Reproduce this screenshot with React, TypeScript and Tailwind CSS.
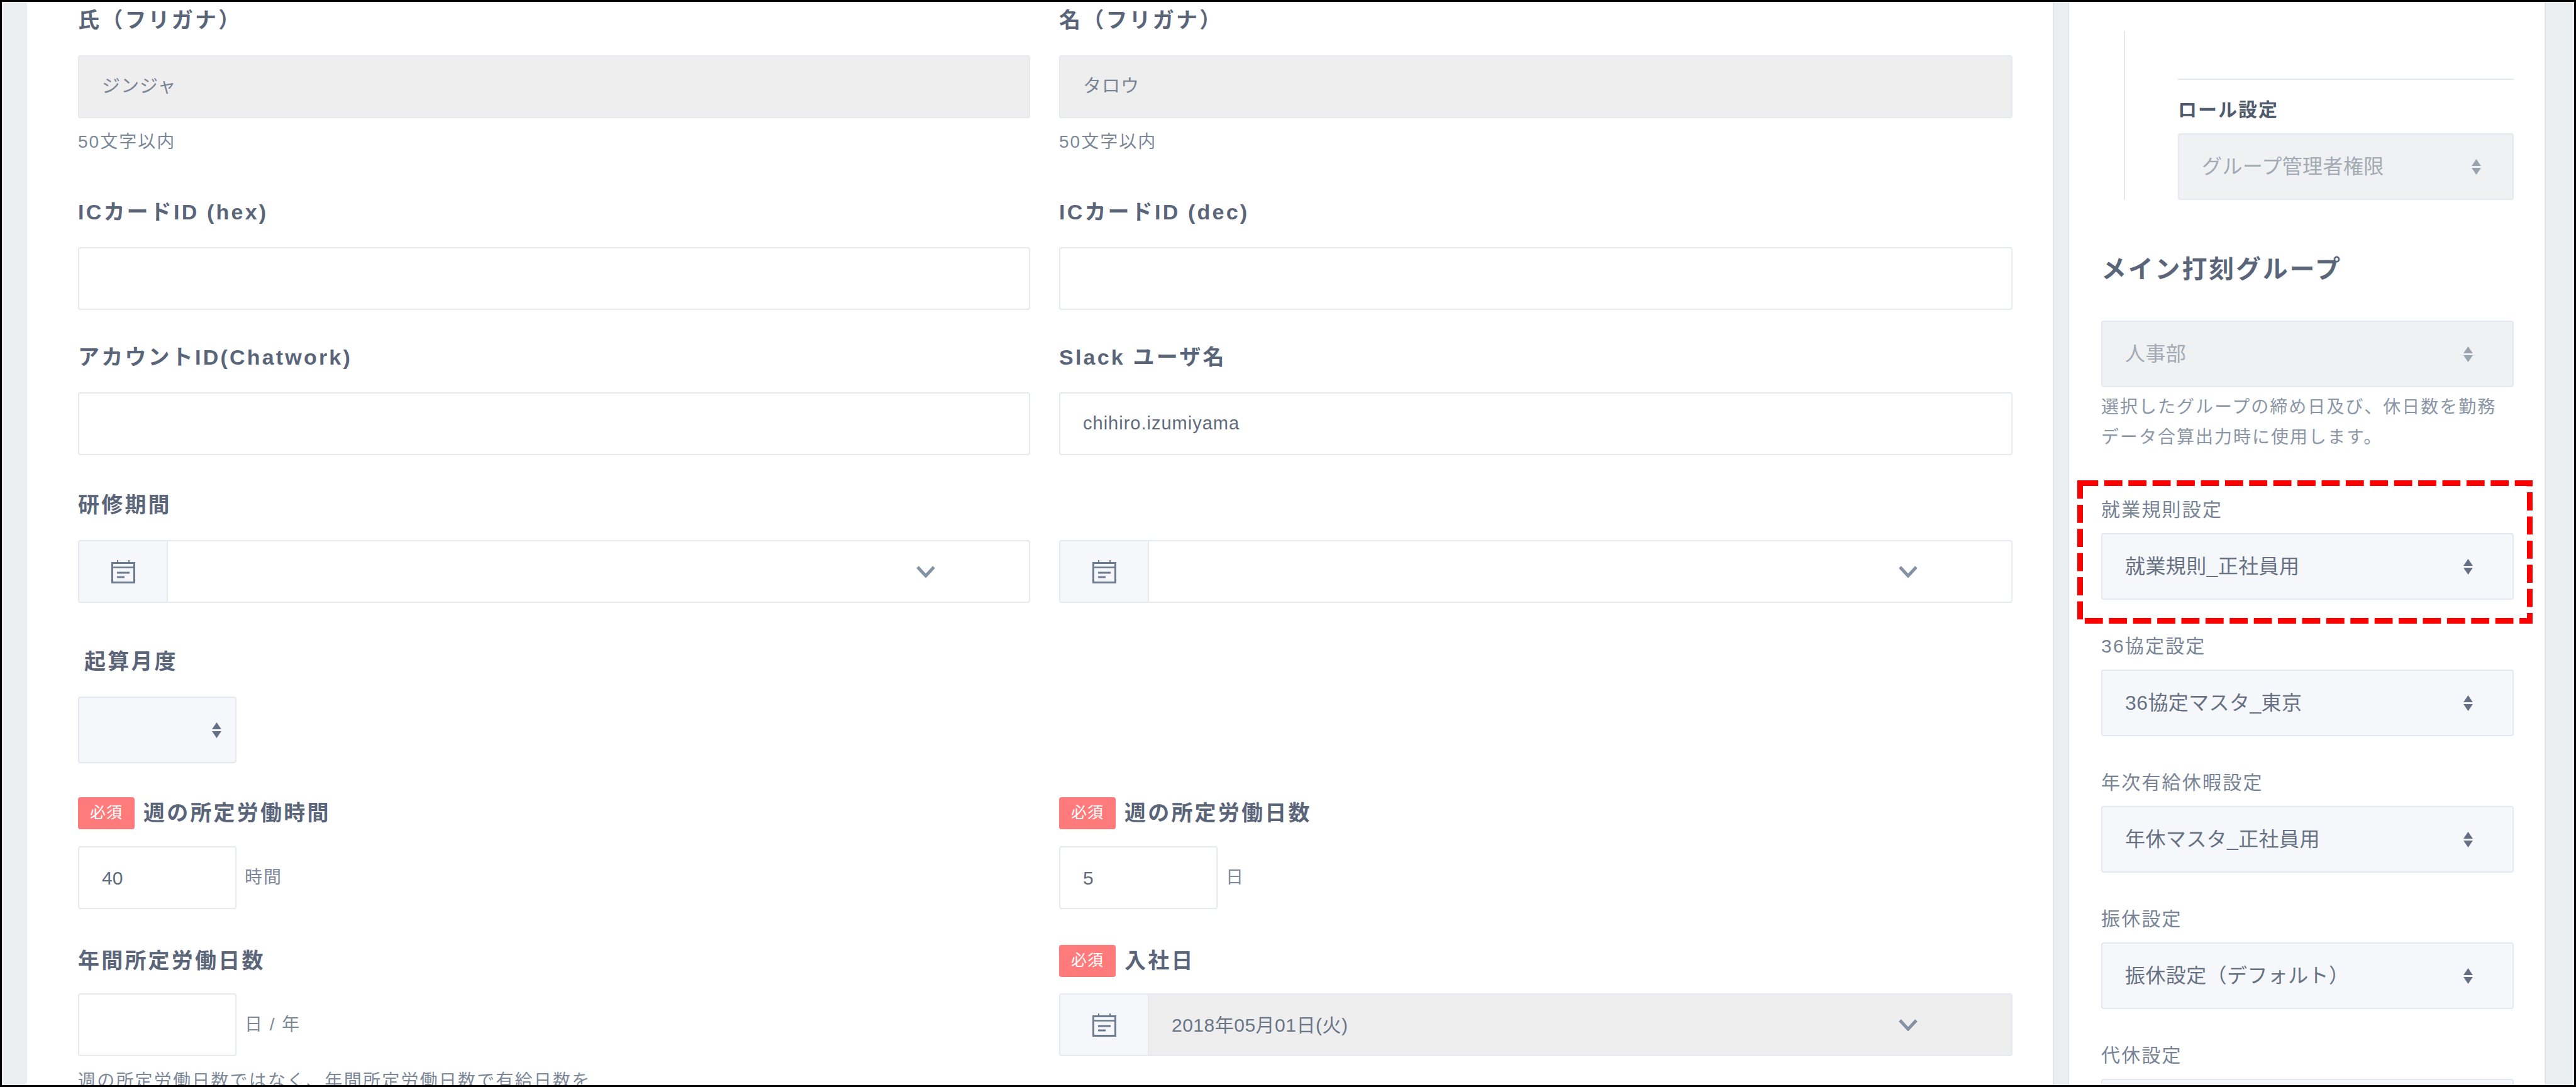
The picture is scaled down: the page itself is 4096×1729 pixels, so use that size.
import React from "react";

const Cal = () => (
  <svg width="38" height="37" viewBox="0 0 38 37" fill="none" stroke="#6b7a90">
    <rect x="1.5" y="4.5" width="35" height="31" strokeWidth="3" />
    <path d="M1.5 11.5H36.5" strokeWidth="2.5" />
    <path d="M10 0V5M28 0V5" strokeWidth="2" />
    <path d="M9 20H29M9 27H21" strokeWidth="3" />
  </svg>
);

const Chevron = () => (
  <svg width="30" height="19" viewBox="0 0 30 19" fill="none" stroke="#8492a6" strokeWidth="5">
    <path d="M2 2L15 16L28 2" />
  </svg>
);

const Arrows = ({ color = "#667085" }: { color?: string }) => (
  <svg width="15" height="25" viewBox="0 0 15 25" fill={color}>
    <path d="M7.5 0L15 11H0Z" />
    <path d="M0 14H15L7.5 25Z" />
  </svg>
);

const Badge = () => (
  <span className="mr-[14px] flex h-[51px] w-[90px] items-center justify-center rounded-[4px] bg-[#ff7b7b] text-[25px] font-normal tracking-[1px] text-white">
    必須
  </span>
);

const Label = ({ children, req, mb = "mb-[30px]", indent }: { children?: React.ReactNode; req?: boolean; mb?: string; indent?: boolean }) => (
  <div className={`flex h-[52px] items-center text-[34px] font-bold tracking-[3.2px] text-[#5a6579] ${mb} ${indent ? "pl-[10px]" : ""}`}>
    {req && <Badge />}
    {children}
  </div>
);

const Input = ({ value, disabled }: { value?: string; disabled?: boolean }) => (
  <div className={`flex h-[100px] items-center rounded-[4px] border-2 border-[#e6e9ed] px-[36px] text-[29px] tracking-[1px] ${disabled ? "bg-[#eeeeee] text-[#7b8494]" : "bg-white text-[#5f6b7d]"}`}>
    {value}
  </div>
);

const DateInput = ({ value, disabled }: { value?: string; disabled?: boolean }) => (
  <div className={`flex h-[100px] items-stretch overflow-hidden rounded-[4px] border-2 border-[#e6e9ed] ${disabled ? "bg-[#eeeeee]" : "bg-white"}`}>
    <div className="flex w-[141px] items-center justify-center border-r-2 border-[#e6e9ed] bg-[#f5f7fa]">
      <Cal />
    </div>
    <div className="flex flex-1 items-center justify-between pl-[36px] pr-[149px] text-[30px] tracking-[0.5px] text-[#6a7587]">
      <span>{value}</span>
      <Chevron />
    </div>
  </div>
);

const Small = ({ value }: { value?: string }) => (
  <div className="flex h-[100px] w-[252px] items-center rounded-[4px] border-2 border-[#e6e9ed] bg-white px-[36px] text-[30px] text-[#5f6b7d]">
    {value}
  </div>
);

const Suffix = ({ children }: { children: React.ReactNode }) => (
  <span className="ml-[13px] text-[28px] tracking-[2px] text-[#7c8798]">{children}</span>
);

const Select = ({ value, disabled, h = "h-[106px]", arrowRight = "pr-[63px]" }: { value?: string; disabled?: boolean; h?: string; arrowRight?: string }) => (
  <div className={`flex items-center justify-between rounded-[4px] border-2 border-[#e4e8f0] pl-[36px] text-[32px] tracking-[0.4px] ${h} ${arrowRight} ${disabled ? "bg-[#eff1f3] text-[#a3aab5]" : "bg-[#f5f7fa] text-[#667184]"}`}>
    <span>{value}</span>
    <Arrows color={disabled ? "#9aa3b0" : "#667085"} />
  </div>
);

const SideField = ({ label, value }: { label: string; value: string }) => (
  <div className="mb-[53px]">
    <div className="mb-[18px] flex h-[40px] items-center text-[30px] tracking-[2.2px] text-[#788496]">{label}</div>
    <Select value={value} />
  </div>
);

export default function App() {
  return (
    <div className="flex h-[1729px] w-[4096px] overflow-hidden border-[3px] border-black bg-[#ebeef0] font-['Liberation_Sans','Noto_Sans_CJK_JP',sans-serif]">
      {/* main form */}
      <div className="ml-[40px] h-full w-[3223px] shrink-0 border-r-2 border-[#dfe3e6] bg-white pl-[81px] pt-[3px]">
        <div className="grid w-[3076px] grid-cols-[1514px_1516px] gap-x-[46px]">
          <div>
            <Label>氏（フリガナ）</Label>
            <Input value="ジンジャ" disabled />
            <div className="mt-[18px] h-[40px] text-[28px] leading-[40px] tracking-[2px] text-[#7c8798]">50文字以内</div>
          </div>
          <div>
            <Label>名（フリガナ）</Label>
            <Input value="タロウ" disabled />
            <div className="mt-[18px] h-[40px] text-[28px] leading-[40px] tracking-[2px] text-[#7c8798]">50文字以内</div>
          </div>

          <div className="mt-[65px]">
            <Label>ICカードID (hex)</Label>
            <Input />
          </div>
          <div className="mt-[65px]">
            <Label>ICカードID (dec)</Label>
            <Input />
          </div>

          <div className="mt-[49px]">
            <Label>アカウントID(Chatwork)</Label>
            <Input />
          </div>
          <div className="mt-[49px]">
            <Label>Slack ユーザ名</Label>
            <Input value="chihiro.izumiyama" />
          </div>

          <div className="mt-[53px]">
            <Label>研修期間</Label>
            <DateInput />
          </div>
          <div className="mt-[53px]">
            <Label />
            <DateInput />
          </div>

          <div className="col-span-2 mt-[67px]">
            <Label indent>起算月度</Label>
            <div className="w-[252px]">
              <Select arrowRight="pr-[22px]" />
            </div>
          </div>

          <div className="mt-[53px]">
            <Label req mb="mb-[27px]">週の所定労働時間</Label>
            <div className="flex items-center">
              <Small value="40" />
              <Suffix>時間</Suffix>
            </div>
          </div>
          <div className="mt-[53px]">
            <Label req mb="mb-[27px]">週の所定労働日数</Label>
            <div className="flex items-center">
              <Small value="5" />
              <Suffix>日</Suffix>
            </div>
          </div>

          <div className="mt-[56px]">
            <Label mb="mb-[26px]">年間所定労働日数</Label>
            <div className="flex items-center">
              <Small />
              <Suffix>日 / 年</Suffix>
            </div>
            <div className="mt-[20px] text-[28px] leading-[40px] tracking-[2.2px] text-[#7c8798]">週の所定労働日数ではなく、年間所定労働日数で有給日数を</div>
          </div>
          <div className="mt-[56px]">
            <Label req mb="mb-[26px]">入社日</Label>
            <DateInput value="2018年05月01日(火)" disabled />
          </div>
        </div>
      </div>

      {/* side panel */}
      <div className="relative ml-[22px] flex h-full w-[760px] shrink-0 flex-col border-x-2 border-[#e2e6e9] bg-white pl-[51px] pr-[49px]">
        <div className="ml-[36px] mt-[46px] flex h-[269px] shrink-0 flex-col border-l-2 border-[#e4e8ee] pl-[84px]">
          <div className="mt-[76px] h-[2px] bg-[#e2e7ef]" />
          <div className="mb-[18px] mt-[27px] flex h-[40px] items-center text-[30px] font-bold tracking-[2px] text-[#4f5a6c]">ロール設定</div>
          <Select value="グループ管理者権限" disabled arrowRight="pr-[50px]" />
        </div>

        <div className="mb-[52px] mt-[80px] flex h-[60px] shrink-0 items-center text-[40px] font-bold tracking-[2.8px] text-[#5a6579]">メイン打刻グループ</div>
        <div className="shrink-0">
          <Select value="人事部" disabled />
        </div>
        <div className="mb-[71px] mt-[8px] shrink-0 text-[28px] leading-[47.5px] tracking-[2px] text-[#8a95a5]">
          選択したグループの締め日及び、休日数を勤務
          <br />
          データ合算出力時に使用します。
        </div>

        <div className="shrink-0"><SideField label="就業規則設定" value="就業規則_正社員用" /></div>
        <div className="shrink-0"><SideField label="36協定設定" value="36協定マスタ_東京" /></div>
        <div className="shrink-0"><SideField label="年次有給休暇設定" value="年休マスタ_正社員用" /></div>
        <div className="shrink-0"><SideField label="振休設定" value="振休設定（デフォルト）" /></div>
        <div className="shrink-0"><SideField label="代休設定" value="" /></div>

        {/* red dashed annotation */}
        <svg className="absolute left-[13px] top-[761px]" width="724" height="228" fill="none">
          <rect x="4.5" y="4.5" width="715" height="219" stroke="#ff0000" strokeWidth="9" strokeDasharray="28.8 9.6" />
        </svg>
      </div>
    </div>
  );
}
